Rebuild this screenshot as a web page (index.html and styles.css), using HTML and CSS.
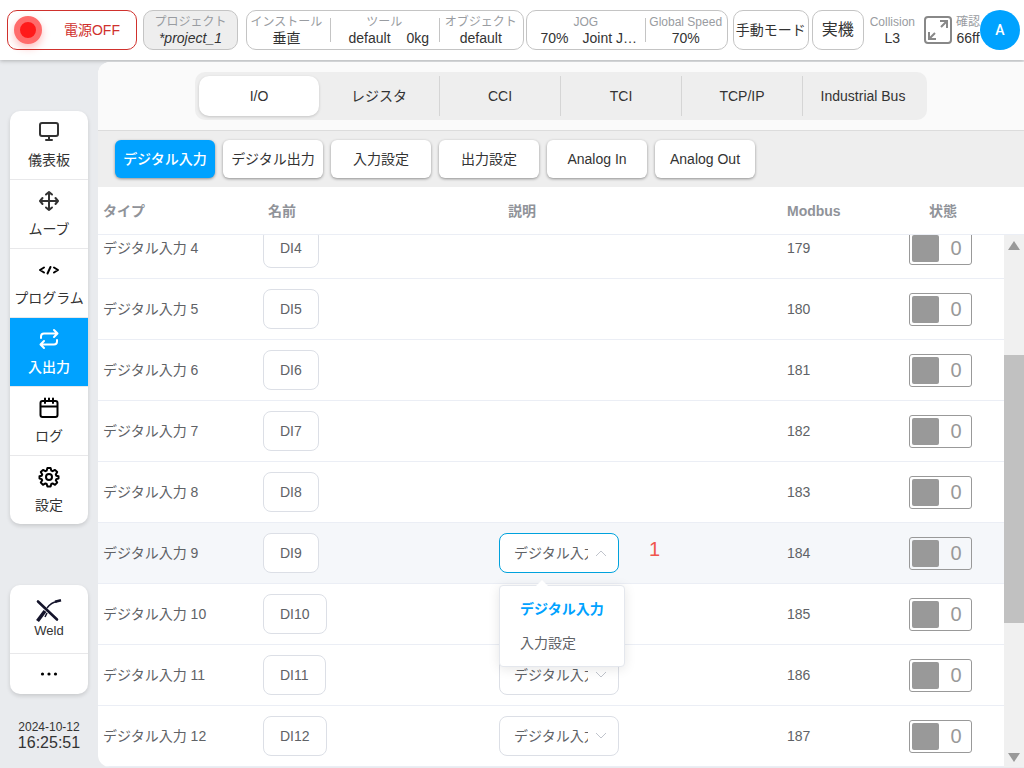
FILE: index.html
```html
<!DOCTYPE html>
<html lang="ja">
<head>
<meta charset="utf-8">
<title>I/O</title>
<link rel="stylesheet" href="styles.css">
</head>
<body>
<header class="topbar">
  <button class="box power"><span class="lamp"></span><span class="power-text">電源OFF</span></button>
  <button class="box project"><span class="label">プロジェクト</span><em class="value">*project_1</em></button>
  <div class="box group group-setup">
    <div class="cell cell-install"><span class="label">インストール</span><span class="value">垂直</span></div>
    <div class="cell cell-tool"><span class="label">ツール</span><span class="value pair"><span>default</span><span>0kg</span></span></div>
    <div class="cell cell-object"><span class="label">オブジェクト</span><span class="value">default</span></div>
  </div>
  <div class="box group group-jog">
    <div class="cell cell-jog"><span class="label">JOG</span><span class="value pair jog-pair"><span>70%</span><span>Joint J…</span></span></div>
    <div class="cell cell-speed"><span class="label">Global Speed</span><span class="value">70%</span></div>
  </div>
  <button class="box mode">手動モード</button>
  <button class="box machine">実機</button>
  <div class="stat collision"><span class="label">Collision</span><span class="value">L3</span></div>
  <button class="expand" aria-label="全画面">
    <svg width="30" height="30" viewBox="0 0 30 30" fill="none" stroke="#888" stroke-width="2"><rect x="2" y="2" width="26" height="26" rx="3"/><path d="M18 12l6-6M17 6h7v7M12 18l-6 6M6 17v7h7"/></svg>
  </button>
  <div class="stat check"><span class="label">確認</span><span class="value">66ff</span></div>
  <button class="avatar">A</button>
</header>
<div class="layout">
  <aside class="side">
    <nav class="menu">
      <a class="item" href="#"><svg class="icon" viewBox="0 0 22 22"><rect x="2" y="2" width="18" height="13" rx="2"/><path d="M8 19h6M11 15v4"/></svg><span>儀表板</span></a>
      <a class="item" href="#"><svg class="icon" viewBox="0 0 22 22"><path d="M4.500 8L2 11l2.500 3M8 4.500L11 2l3 2.500M14 17.500L11 20l-3-2.500M17.500 8l2.500 3-2.500 3M2 11h18M11 2v18"/></svg><span>ムーブ</span></a>
      <a class="item" href="#"><svg class="icon dark" viewBox="0 0 22 22"><path d="M6 8.500L2 11l4 2.500M16 8.500l4 2.500-4 2.500M12.500 8l-3 6.500"/></svg><span>プログラム</span></a>
      <a class="item active" href="#"><svg class="icon" viewBox="0 0 22 22"><path d="M16 2l3.500 3.500L16 9M3 10V8.500a3 3 0 0 1 3-3h13M6 20l-3.500-3.500L6 13M19 12v1.500a3 3 0 0 1-3 3H3"/></svg><span>入出力</span></a>
      <a class="item" href="#"><svg class="icon dark" viewBox="0 0 22 22"><rect x="2.500" y="4" width="17" height="16" rx="2"/><path d="M7 1.500V6M15 1.500V6M11 1.500V4M3 9.500h16"/></svg><span>ログ</span></a>
      <a class="item" href="#"><svg class="icon dark" viewBox="0 0 22 22"><circle cx="11" cy="11" r="3"/><path d="M9.400 2h3.200l.7 2.600 1.300.6L17 3.900 19.200 6 17.800 8.500l.5 1.200 2.200.5v2.300l-2.200.6-.5 1.200 1.400 2.300-2.200 2.200-2.400-1.400-1.300.6-.7 2.400H9.400l-.7-2.400-1.300-.6L5 18.800l-2.200-2.200 1.400-2.300-.5-1.200-2.200-.6v-2.300l2.200-.5.5-1.200L2.800 6 5 3.900l2.400 1.300 1.300-.6z"/></svg><span>設定</span></a>
    </nav>
    <nav class="menu menu-extra">
      <a class="item item-weld" href="#"><svg width="28" height="26" viewBox="0 0 28 26" fill="none" stroke="#14142b"><path d="M3 3.500l19 18" stroke-width="2.600" stroke-linecap="round"/><path d="M2.500 23l7.500-10" stroke-width="3.600"/><path d="M12 10C15 6 18 4 22 3.500" stroke-width="1.400"/><path d="M20 3.800l6-1.500" stroke-width="2.600"/><path d="M10 19l2-4" stroke-width="1.500"/></svg><span>Weld</span></a>
      <a class="item item-more" href="#" aria-label="その他"><svg width="20" height="6" viewBox="0 0 20 6"><circle cx="3.500" cy="3" r="1.600"/><circle cx="10" cy="3" r="1.600"/><circle cx="16.500" cy="3" r="1.600"/></svg></a>
    </nav>
    <div class="clock"><span class="date">2024-10-12</span><span class="time">16:25:51</span></div>
  </aside>
  <main class="panel">
    <div class="tabzone">
      <div class="tabs">
        <button class="tab selected">I/O</button>
        <button class="tab">レジスタ</button>
        <button class="tab">CCI</button>
        <button class="tab">TCI</button>
        <button class="tab">TCP/IP</button>
        <button class="tab">Industrial Bus</button>
      </div>
    </div>
    <div class="subtabs">
      <button class="sub selected">デジタル入力</button>
      <button class="sub">デジタル出力</button>
      <button class="sub">入力設定</button>
      <button class="sub">出力設定</button>
      <button class="sub">Analog In</button>
      <button class="sub">Analog Out</button>
    </div>
    <div class="headwrap">
      <table class="grid">
        <colgroup><col class="c-type"><col class="c-name"><col><col class="c-modbus"><col class="c-state"></colgroup>
        <thead><tr><th>タイプ</th><th class="h-name">名前</th><th class="h-desc">説明</th><th>Modbus</th><th class="h-state">状態</th></tr></thead>
      </table>
    </div>
    <div class="bodywrap">
      <div class="rows">
        <table class="grid">
          <colgroup><col class="c-type"><col class="c-name"><col><col class="c-modbus"><col class="c-state"></colgroup>
          <tbody>
            <tr><td>デジタル入力 4</td><td><button class="name">DI4</button></td><td></td><td>179</td><td><button class="toggle"><i class="knob"></i><span>0</span></button></td></tr>
            <tr><td>デジタル入力 5</td><td><button class="name">DI5</button></td><td></td><td>180</td><td><button class="toggle"><i class="knob"></i><span>0</span></button></td></tr>
            <tr><td>デジタル入力 6</td><td><button class="name">DI6</button></td><td></td><td>181</td><td><button class="toggle"><i class="knob"></i><span>0</span></button></td></tr>
            <tr><td>デジタル入力 7</td><td><button class="name">DI7</button></td><td></td><td>182</td><td><button class="toggle"><i class="knob"></i><span>0</span></button></td></tr>
            <tr><td>デジタル入力 8</td><td><button class="name">DI8</button></td><td></td><td>183</td><td><button class="toggle"><i class="knob"></i><span>0</span></button></td></tr>
            <tr class="hover"><td>デジタル入力 9</td><td><button class="name">DI9</button></td><td>
              <div class="desc">
                <div class="picker open">
                  <select aria-label="説明 9"><option>デジタル入力</option><option>入力設定</option></select>
                  <svg class="chevron" viewBox="0 0 12 8"><path d="M1 7l5-5 5 5"/></svg>
                  <ul class="popup" role="listbox"><li class="option chosen" role="option" aria-selected="true">デジタル入力</li><li class="option" role="option">入力設定</li></ul>
                </div>
                <span class="mark">1</span>
              </div></td><td>184</td><td><button class="toggle"><i class="knob"></i><span>0</span></button></td></tr>
            <tr><td>デジタル入力 10</td><td><button class="name">DI10</button></td><td><div class="picker"><select aria-label="説明 10"><option>デジタル入力</option><option>入力設定</option></select><svg class="chevron" viewBox="0 0 12 8"><path d="M1 1l5 5 5-5"/></svg></div></td><td>185</td><td><button class="toggle"><i class="knob"></i><span>0</span></button></td></tr>
            <tr><td>デジタル入力 11</td><td><button class="name">DI11</button></td><td><div class="picker"><select aria-label="説明 11"><option>デジタル入力</option><option>入力設定</option></select><svg class="chevron" viewBox="0 0 12 8"><path d="M1 1l5 5 5-5"/></svg></div></td><td>186</td><td><button class="toggle"><i class="knob"></i><span>0</span></button></td></tr>
            <tr><td>デジタル入力 12</td><td><button class="name">DI12</button></td><td><div class="picker"><select aria-label="説明 12"><option>デジタル入力</option><option>入力設定</option></select><svg class="chevron" viewBox="0 0 12 8"><path d="M1 1l5 5 5-5"/></svg></div></td><td>187</td><td><button class="toggle"><i class="knob"></i><span>0</span></button></td></tr>
          </tbody>
        </table>
      </div>
      <div class="scrollbar">
        <svg width="20" height="20" viewBox="0 0 20 20"><path d="M4 15h12l-6-9z" fill="#999"/></svg>
        <span class="thumb"></span>
        <svg class="down" width="20" height="20" viewBox="0 0 20 20"><path d="M4 6h12l-6 9z" fill="#999"/></svg>
      </div>
    </div>
  </main>
</div>
</body>
</html>
```
FILE: styles.css
```css
* { box-sizing: border-box; }
body {
  margin: 0;
  height: 100vh;
  display: flex;
  flex-direction: column;
  overflow: hidden;
  background: #e9ebee;
  color: #333;
  font-family: "Liberation Sans", "Noto Sans CJK JP", sans-serif;
  font-size: 14px;
  line-height: 16px;
}
button, select { font: inherit; color: inherit; margin: 0; padding: 0; border: 0; background: none; }
a { color: inherit; text-decoration: none; }

.topbar {
  position: relative;
  flex: none;
  display: flex;
  align-items: center;
  height: 60px;
  padding: 0 4px 0 7px;
  background: #fff;
  box-shadow: 0 1px 4px rgba(0, 0, 0, .25);
}
.box { height: 40px; border: 1px solid #c4c4c4; border-radius: 10px; background: #fff; white-space: nowrap; }
.label { display: block; font-size: 12px; line-height: 16px; height: 16px; color: #999ca1; white-space: nowrap; }
.value { display: block; line-height: 16px; height: 16px; white-space: nowrap; }
.power { flex: 1 1 130px; display: flex; align-items: center; justify-content: space-between; padding: 0 16px 0 6px; border-color: #d0312d; color: #d0312d; }
.lamp { width: 28px; height: 28px; border-radius: 50%; background: #ff1a1a; border: 6px solid #ff6b6b; box-shadow: 0 4px 8px rgba(255, 0, 0, .25); }
.project { flex: 1 1 95px; margin-left: 6px; background: #eee; }
.group { display: flex; align-items: center; text-align: center; }
.group-setup { flex: 1 1 278px; margin-left: 8px; }
.group-jog { flex: 1 1 202px; margin-left: 2px; }
.cell { position: relative; min-width: 0; }
.cell + .cell::before { content: ""; position: absolute; left: 0; top: 4px; height: 24px; border-left: 1px solid #c4c4c4; }
.cell-install { flex: 1 1 83px; padding-right: 4px; }
.cell-tool { flex: 1 1 109px; }
.cell-object { flex: 1 1 84px; }
.cell-jog { flex: 1 1 118px; }
.cell-speed { flex: 1 1 82px; }
.pair { display: flex; justify-content: center; gap: 16px; padding-left: 9px; }
.jog-pair { gap: 14px; padding-left: 6px; }
.mode { flex: 1 1 76px; margin-left: 5px; }
.machine { flex: 1 1 52px; margin-left: 3px; font-size: 16px; }
.stat { text-align: center; flex: none; }
.collision { margin: 0 8px 0 6px; }
.expand { flex: none; width: 30px; height: 30px; }
.expand svg { display: block; }
.check { margin-left: 3px; }
.avatar { flex: none; width: 40px; height: 40px; border-radius: 50%; background: #00a2ff; color: #fff; font-family: Roboto, sans-serif; font-weight: 500; }

.layout { flex: 1; min-height: 0; display: flex; padding: 2px 0 1px; }
.side { flex: none; width: 98px; padding: 49px 10px 0; display: flex; flex-direction: column; }
.menu { border-radius: 10px; background: #fff; overflow: hidden; box-shadow: 0 2px 4px rgba(0, 0, 0, .14); flex: none; }
.item { display: flex; flex-direction: column; align-items: center; gap: 8px; height: 69px; padding-top: 10px; border-bottom: 1px solid #e8e8ea; line-height: 18px; white-space: nowrap; }
.item:last-child { height: 68px; border-bottom: 0; }
.active { background: #00a2ff; color: #fff; font-weight: 500; }
.icon { width: 22px; height: 22px; fill: none; stroke: currentColor; stroke-width: 2; stroke-linecap: round; stroke-linejoin: round; flex: none; }
.dark { stroke: #000; }
.menu-extra { margin-top: 61px; }
.item-weld { padding-top: 13px; gap: 0; line-height: 13px; font-size: 13px; }
.item.item-more { height: 40px; padding: 0; justify-content: center; }
.clock { display: flex; flex-direction: column; align-items: center; margin-top: 25px; }
.date { font-size: 12px; }
.time { font-size: 16px; }

.panel { position: relative; flex: 1; min-width: 0; display: flex; flex-direction: column; background: #fff; border-radius: 12px 0 0 12px; overflow: hidden; }
.tabzone { flex: none; display: flex; justify-content: center; padding: 10px 0; background: #fafafa; border-bottom: 1px solid #dcdcdc; }
.tabs { display: flex; padding: 4px; background: #eee; border-radius: 10px; }
.tab { width: 121px; height: 40px; border-left: 1px solid #d5d5d5; }
.tab.selected { width: 120px; background: #fff; border: 0; border-radius: 10px; box-shadow: 0 1px 3px rgba(0, 0, 0, .18); }
.tab.selected + .tab { width: 120px; border: 0; }
.subtabs { flex: none; display: flex; gap: 8px; padding: 9px 17px; background: #eee; }
.sub { width: 100px; height: 38px; border-radius: 6px; background: #fff; box-shadow: 0 1px 3px rgba(0, 0, 0, .4); white-space: nowrap; }
.sub.selected { background: #00a2ff; color: #fff; font-weight: 500; }

.headwrap { flex: none; padding-right: 20px; border-bottom: 1px solid #ebeef5; }
.grid { width: 100%; table-layout: fixed; border-collapse: separate; border-spacing: 0; }
.c-type { width: 160px; }
.c-name { width: 236px; }
.c-modbus { width: 122px; }
.c-state { width: 100px; }
th { height: 47px; padding: 0 5px; text-align: left; color: #909399; font-weight: 700; }
.h-name { padding-left: 10px; }
.h-desc { padding-left: 14px; }
.h-state { padding-left: 25px; }
td { height: 61px; padding: 0 5px; border-bottom: 1px solid #ebeef5; color: #606266; vertical-align: middle; }
.hover td { background: #f5f7fa; }
.bodywrap { flex: 1; min-height: 0; display: flex; }
.rows { flex: 1; min-width: 0; display: flex; flex-direction: column; justify-content: flex-end; overflow: hidden; }
.name { display: block; height: 40px; padding: 0 16px; border: 1px solid #dcdfe6; border-radius: 8px; background: #fff; }
.toggle { display: flex; align-items: center; width: 63px; height: 33px; padding: 2px; border: 1px solid #999; border-radius: 3px; color: #999; font-size: 20px; }
.knob { width: 27px; height: 27px; border-radius: 2px; background: #999; }
.toggle span { flex: 1; padding-left: 4px; text-align: center; }
.desc { display: flex; align-items: center; gap: 30px; }
.picker { position: relative; width: 120px; height: 40px; }
.picker select { appearance: none; width: 100%; height: 100%; padding: 0 30px 0 14px; border: 1px solid #dcdfe6; border-radius: 8px; background: #fff; }
.open select { border-color: #00a2dd; }
.chevron { position: absolute; right: 12px; top: 16px; width: 12px; height: 8px; fill: none; stroke: #c0c4cc; pointer-events: none; }
.popup { position: absolute; z-index: 2; left: 0; top: 52px; width: 126px; margin: 0; padding: 6px 0; list-style: none; background: #fff; border: 1px solid #e4e7ed; border-radius: 4px; box-shadow: 0 2px 12px rgba(0, 0, 0, .1); }
.popup::before { content: ""; position: absolute; left: 36px; top: -6px; border: solid transparent; border-width: 0 6px 6px; border-bottom-color: #fff; }
.option { padding: 0 20px; line-height: 34px; white-space: nowrap; }
.chosen { color: #00a2ff; font-weight: 700; }
.mark { padding-bottom: 8px; font-size: 20px; color: #f0554d; }
.scrollbar { flex: none; width: 20px; display: grid; grid-template-rows: 20px 100fr 268fr 124fr 20px; background: #f0f0f0; }
.thumb { grid-row: 3; background: #c1c1c1; }
.down { grid-row: 5; }
```
